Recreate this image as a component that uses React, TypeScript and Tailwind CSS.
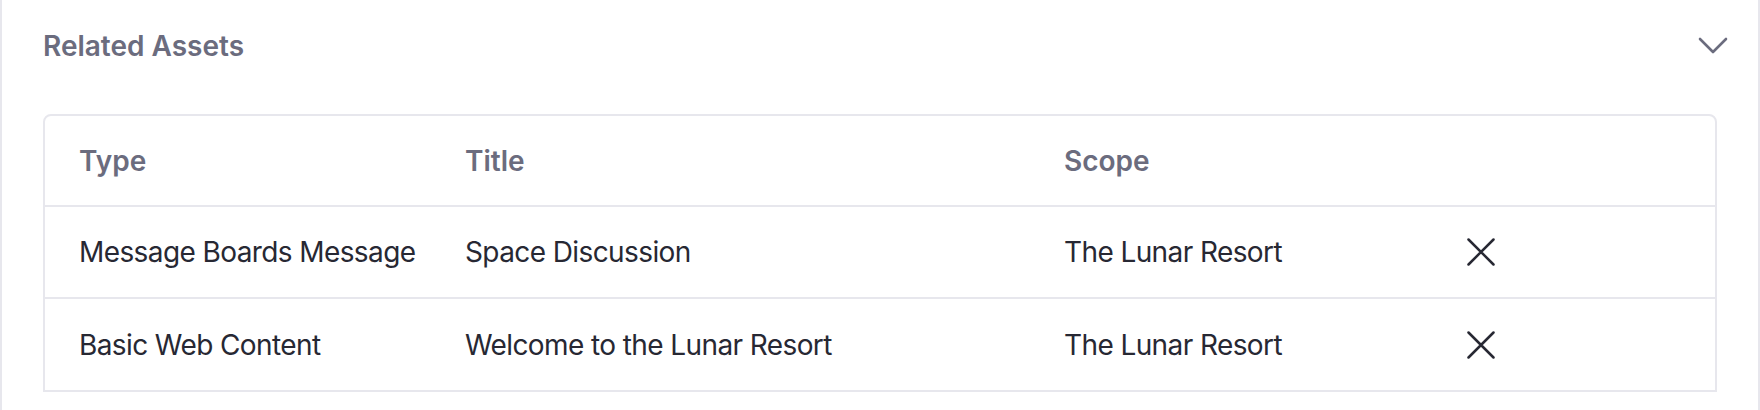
import React from 'react';

type Asset = {
  type: string;
  title: string;
  scope: string;
};

const ASSETS: Asset[] = [
  { type: 'Message Boards Message', title: 'Space Discussion', scope: 'The Lunar Resort' },
  { type: 'Basic Web Content', title: 'Welcome to the Lunar Resort', scope: 'The Lunar Resort' },
];

const AngleDown: React.FC = () => (
  <svg width="30" height="18" viewBox="0 0 30 18" fill="none" className="text-[#6b6c7e]">
    <path d="M2 2 L15 15 L28 2" stroke="currentColor" strokeWidth="2.6" strokeLinecap="round" strokeLinejoin="round" />
  </svg>
);

const Times: React.FC = () => (
  <svg width="28" height="28" viewBox="0 0 28 28" fill="none" className="text-[#272833]">
    <path d="M1.5 1.5 L26.5 26.5 M26.5 1.5 L1.5 26.5" stroke="currentColor" strokeWidth="2.5" strokeLinecap="round" />
  </svg>
);

const App: React.FC = () => {
  return (
    <div className="h-[410px] w-full bg-white border-x-2 border-[#e7e7ed] font-['Inter',sans-serif] overflow-hidden">
      {/* Panel header */}
      <div className="flex items-center justify-between pl-[41px] pr-[30px] pt-[29px]">
        <h3 className="text-[28px] leading-[34px] font-semibold text-[#6b6c7e]">Related Assets</h3>
        <AngleDown />
      </div>

      {/* Assets table */}
      <div className="mx-[41px] mt-[51px] border-2 border-[#e7e7ed] rounded-t-[8px]">
        <table className="w-full table-fixed text-[28px] leading-[34px]">
          <colgroup>
            <col className="w-[386px]" />
            <col className="w-[599px]" />
            <col className="w-[403px]" />
            <col />
          </colgroup>
          <thead>
            <tr className="h-[90px] border-b-2 border-[#e7e7ed] text-left text-[#6b6c7e]">
              <th className="pl-[34px] font-semibold">Type</th>
              <th className="pl-[34px] font-semibold">Title</th>
              <th className="pl-[34px] font-semibold">Scope</th>
              <th />
            </tr>
          </thead>
          <tbody className="text-[#272833] tracking-[-0.6px]">
            {ASSETS.map((asset, i) => (
              <tr
                key={asset.title}
                className={i < ASSETS.length - 1 ? 'h-[92px] border-b-2 border-[#e7e7ed]' : 'h-[92px]'}
              >
                <td className="pl-[34px] whitespace-nowrap">{asset.type}</td>
                <td className="pl-[34px] whitespace-nowrap">{asset.title}</td>
                <td className="pl-[34px] whitespace-nowrap">{asset.scope}</td>
                <td className="pl-[34px]">
                  <button className="flex items-center">
                    <Times />
                  </button>
                </td>
              </tr>
            ))}
          </tbody>
        </table>
      </div>
    </div>
  );
};

export default App;
